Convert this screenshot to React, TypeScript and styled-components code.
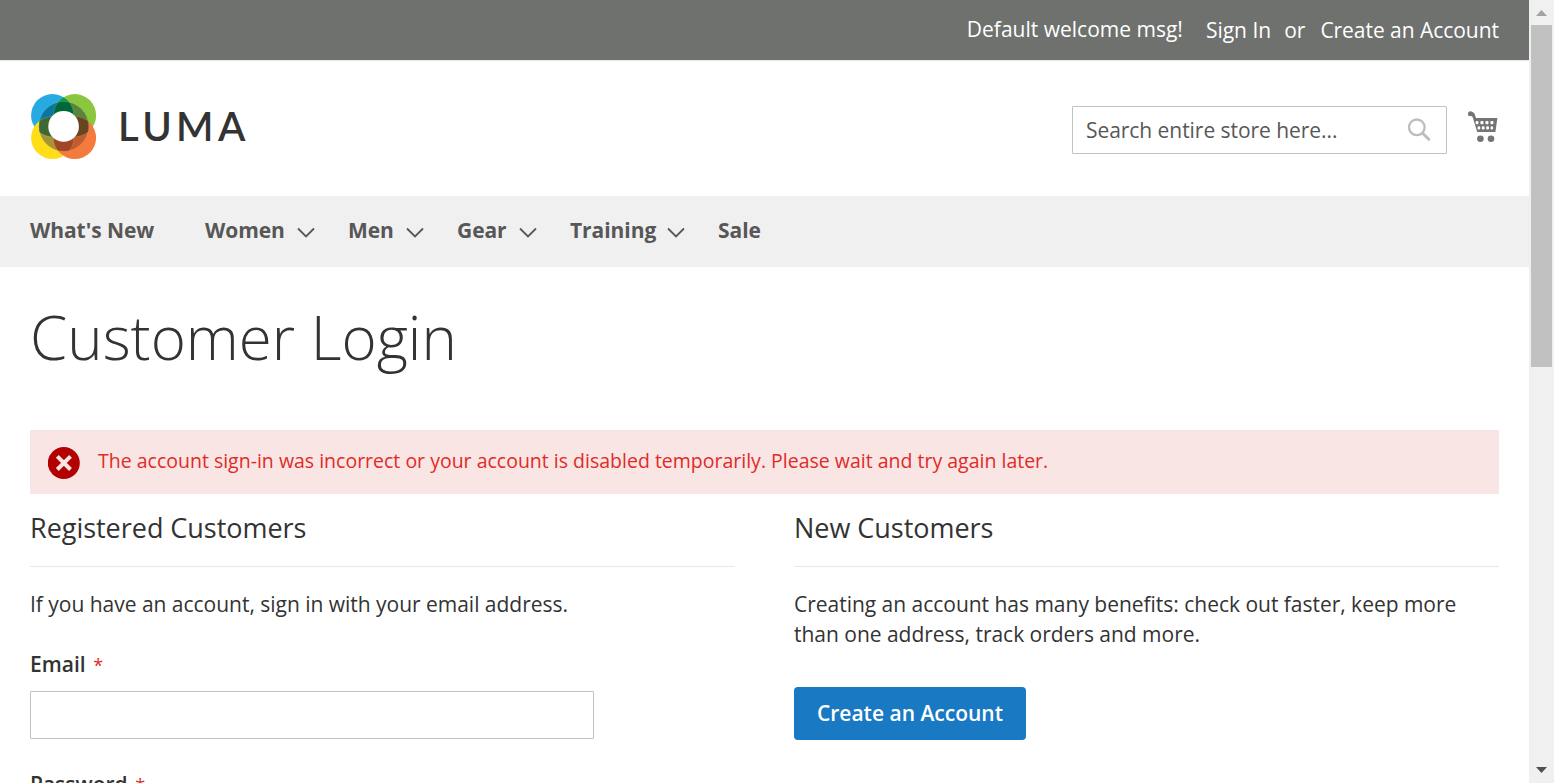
import React from "react";
import styled, { createGlobalStyle } from "styled-components";

const GlobalStyle = createGlobalStyle`
  *, *::before, *::after { box-sizing: border-box; }
  html, body { margin: 0; padding: 0; background: #fff; overflow: hidden; }
  body { font-family: "Open Sans", "Helvetica Neue", Helvetica, Arial, sans-serif; font-size: 21px; line-height: 30px; color: #333; }
  h1, h2, p { margin: 0; }
`;

const Viewport = styled.div`
  display: flex;
  width: 1554px;
  height: 783px;
  overflow: hidden;
`;

const Page = styled.div`
  flex: 1;
  min-width: 0;
  height: 783px;
  overflow: hidden;
`;

const TopBar = styled.div`
  display: flex;
  justify-content: flex-end;
  height: 61px;
  padding: 14px 30px 0 0;
  background: #6e716e;
  border-bottom: 1px solid #e8e8e8;
  color: #fff;
  white-space: nowrap;
`;

const TopItem = styled.span<{ $gap?: number; $drop?: number; $spacing?: number }>`
  margin-left: ${(p) => p.$gap ?? 0}px;
  padding-top: ${(p) => p.$drop ?? 0}px;
  letter-spacing: ${(p) => p.$spacing ?? 0}px;
`;

const Header = styled.header`
  display: flex;
  align-items: flex-start;
  height: 135px;
  padding: 0 30px;
`;

const Logo = styled.a`
  display: flex;
  margin-top: 32px;
  margin-right: auto;
`;

const Wordmark = styled.span`
  margin-left: 20px;
  margin-top: 8px;
  font-family: Lato, sans-serif;
  font-weight: 600;
  font-size: 40px;
  line-height: 50px;
  letter-spacing: 4.4px;
  color: #333;
`;

const SearchBox = styled.div`
  display: flex;
  align-items: center;
  justify-content: space-between;
  width: 375px;
  height: 48px;
  margin-top: 45px;
  padding: 0 15px 0 13px;
  border: 1px solid #c2c2c2;
  border-radius: 1px;
  color: #575757;
`;

const SearchHint = styled.span`
  letter-spacing: -0.05px;
`;

const CartButton = styled.a`
  display: flex;
  margin: 48px 0 0 20px;
  width: 32px;
`;

const NavBar = styled.nav`
  display: flex;
  height: 71px;
  padding: 19px 30px;
  background: #f0f0f0;
`;

const NavItem = styled.a<{ $width: number }>`
  display: flex;
  align-items: flex-start;
  justify-content: space-between;
  width: ${(p) => p.$width}px;
  margin-right: 33px;
  font-weight: 700;
  letter-spacing: -0.06px;
  color: #575757;
  white-space: nowrap;
`;

const Chevron = styled.svg`
  flex: none;
  margin-top: 12px;
`;

const Main = styled.main`
  padding: 0 30px;
`;

const PageTitle = styled.h1`
  padding-top: 37px;
  height: 163px;
  font-size: 60px;
  line-height: 66px;
  font-weight: 300;
  white-space: nowrap;
`;

const ErrorMessage = styled.div`
  display: flex;
  height: 64px;
  padding: 17px 18px 0;
  background: #fae5e5;
  color: #e02b27;
  font-size: 19.5px;
  line-height: 27px;
  font-weight: 400;
  white-space: nowrap;
`;

const ErrorText = styled.span`
  margin-left: 18px;
`;

const Columns = styled.div`
  display: grid;
  grid-template-columns: 705px 705px;
  justify-content: space-between;
  padding-top: 15px;
`;

const BlockTitle = styled.h2`
  height: 58px;
  border-bottom: 1px solid #e8e8e8;
  font-size: 27px;
  line-height: 38px;
  font-weight: 400;
  letter-spacing: -0.03px;
`;

const Note = styled.p`
  margin-top: 22px;
  letter-spacing: -0.02px;
  white-space: nowrap;
`;

const Field = styled.div`
  width: 564px;
  margin-top: 30px;
`;

const Label = styled.label`
  display: block;
  margin-bottom: 11px;
  font-weight: 600;
`;

const Required = styled.span`
  margin-left: 7.5px;
  font-size: 18px;
  font-weight: 400;
  color: #e02b27;
`;

const Input = styled.input`
  display: block;
  width: 100%;
  height: 48px;
  border: 1px solid #c2c2c2;
  border-radius: 1px;
  background: #fff;
  outline: none;
`;

const PrimaryButton = styled.button`
  display: block;
  width: 232px;
  height: 53px;
  margin-top: 38px;
  padding: 0;
  border: 0;
  border-radius: 4px;
  background: #1979c3;
  color: #fff;
  font: 600 21px/53px "Open Sans", sans-serif;
`;

const ScrollTrack = styled.div`
  display: flex;
  flex-direction: column;
  align-items: center;
  justify-content: space-between;
  width: 25px;
  height: 783px;
  background: #f0f0f0;
`;

const ScrollThumb = styled.div`
  width: 21px;
  height: 342px;
  margin-bottom: auto;
  background: #c1c1c1;
`;

const ScrollArrow = styled.svg`
  display: block;
  flex: none;
`;

const LumaMark = () => (
  <svg width="68" height="68" viewBox="30 93 68 68">
    <defs>
      <clipPath id="blue"><circle cx="52.4" cy="115.4" r="21.3" /></clipPath>
      <clipPath id="green"><circle cx="74.8" cy="115.4" r="21.3" /></clipPath>
      <clipPath id="yellow"><circle cx="52.4" cy="137.8" r="21.3" /></clipPath>
      <clipPath id="ring"><circle cx="63.8" cy="126.4" r="24.9" /></clipPath>
    </defs>
    <circle cx="52.4" cy="115.4" r="21.3" fill="#27a9e1" />
    <circle cx="74.8" cy="115.4" r="21.3" fill="#8cc63f" />
    <circle cx="52.4" cy="137.8" r="21.3" fill="#ffde17" />
    <circle cx="74.8" cy="137.8" r="21.3" fill="#f47b3c" />
    <g clipPath="url(#blue)"><circle cx="74.8" cy="115.4" r="21.3" fill="#00a14b" /></g>
    <g clipPath="url(#ring)">
      <circle cx="52.4" cy="115.4" r="21.3" fill="#0b75a0" />
      <circle cx="74.8" cy="115.4" r="21.3" fill="#58853b" />
      <circle cx="52.4" cy="137.8" r="21.3" fill="#a89435" />
      <circle cx="74.8" cy="137.8" r="21.3" fill="#c15c2f" />
      <g clipPath="url(#blue)">
        <circle cx="52.4" cy="137.8" r="21.3" fill="#3c6a32" />
        <circle cx="74.8" cy="115.4" r="21.3" fill="#006838" />
      </g>
      <g clipPath="url(#green)"><circle cx="74.8" cy="137.8" r="21.3" fill="#67461f" /></g>
      <g clipPath="url(#yellow)"><circle cx="74.8" cy="137.8" r="21.3" fill="#a04823" /></g>
    </g>
    <g fill="none" stroke="#fff" strokeOpacity="0.22" strokeWidth="0.6">
      <circle cx="63.8" cy="126.4" r="24.9" />
      <g clipPath="url(#ring)">
        <circle cx="52.4" cy="115.4" r="21.3" />
        <circle cx="74.8" cy="115.4" r="21.3" />
        <circle cx="52.4" cy="137.8" r="21.3" />
        <circle cx="74.8" cy="137.8" r="21.3" />
      </g>
    </g>
    <circle cx="63.6" cy="126.4" r="15.3" fill="#fff" />
  </svg>
);

const SearchIcon = () => (
  <svg width="24" height="24" viewBox="0 0 24 24" fill="none" stroke="#bdbdbd">
    <circle cx="9.8" cy="9.3" r="7.8" strokeWidth="2.3" />
    <path d="M15.6 15.2 21.8 21.3" strokeWidth="3" strokeLinecap="round" />
  </svg>
);

const CartIcon = () => (
  <svg width="32" height="34" viewBox="1467 109 32 34" fill="#757575">
    <path d="M1470 111.2c1.3-.3 3.6 1 4.4 2.2l1.6 4.5h21.4l-2 14h-18.2l-4.4-14.4-.9-1.5c-2.3.7-4-.2-4-2 0-1.4.8-2.4 2.1-2.8z" />
    <circle cx="1480.4" cy="138.7" r="3.3" />
    <circle cx="1491" cy="138.7" r="3.3" />
    <g fill="#fff">
      <rect x="1475.6" y="121" width="2.9" height="3.2" rx="1.2" />
      <rect x="1480.4" y="121" width="3.1" height="3.2" rx="1.2" />
      <rect x="1485.4" y="121" width="3.1" height="3.2" rx="1.2" />
      <rect x="1490.4" y="121" width="3.1" height="3.2" rx="1.2" />
      <rect x="1477.6" y="126.3" width="2.6" height="3.2" rx="1.2" />
      <rect x="1481.8" y="126.3" width="2.8" height="3.2" rx="1.2" />
      <rect x="1486.2" y="126.3" width="2.8" height="3.2" rx="1.2" />
      <rect x="1490.6" y="126.3" width="2.5" height="3.2" rx="1.2" />
    </g>
  </svg>
);

const ErrorIcon = () => (
  <svg width="32" height="32" viewBox="0 0 32 32">
    <circle cx="15.8" cy="16" r="16" fill="#b30000" />
    <path d="M9.3 9.3 22.5 22.5M22.5 9.3 9.3 22.5" stroke="#fae5e5" strokeWidth="4" />
  </svg>
);

const DownChevron = () => (
  <Chevron width="18" height="12" viewBox="0 0 18 12" fill="none" stroke="#575757" strokeWidth="1.8">
    <path d="M1 1.5 9 9.5 17 1.5" />
  </Chevron>
);

const navItems = [
  { label: "What's New", width: 142, menu: false },
  { label: "Women", width: 110, menu: true },
  { label: "Men", width: 76, menu: true },
  { label: "Gear", width: 80, menu: true },
  { label: "Training", width: 115, menu: true },
  { label: "Sale", width: 60, menu: false },
];

export default function App() {
  return (
    <>
      <GlobalStyle />
      <Viewport>
        <Page>
          <TopBar>
            <TopItem>Default welcome msg!</TopItem>
            <TopItem $gap={23} $drop={1}>Sign In</TopItem>
            <TopItem $gap={13} $drop={1}>or</TopItem>
            <TopItem $gap={15} $drop={1} $spacing={-0.04}>Create an Account</TopItem>
          </TopBar>
          <Header>
            <Logo>
              <LumaMark />
              <Wordmark>LUMA</Wordmark>
            </Logo>
            <SearchBox>
              <SearchHint>Search entire store here...</SearchHint>
              <SearchIcon />
            </SearchBox>
            <CartButton><CartIcon /></CartButton>
          </Header>
          <NavBar>
            {navItems.map((item) => (
              <NavItem key={item.label} $width={item.width}>
                {item.label}
                {item.menu && <DownChevron />}
              </NavItem>
            ))}
          </NavBar>
          <Main>
            <PageTitle>Customer Login</PageTitle>
            <ErrorMessage role="alert">
              <ErrorIcon />
              <ErrorText>The account sign-in was incorrect or your account is disabled temporarily. Please wait and try again later.</ErrorText>
            </ErrorMessage>
            <Columns>
              <section>
                <BlockTitle>Registered Customers</BlockTitle>
                <Note>If you have an account, sign in with your email address.</Note>
                <Field>
                  <Label>Email<Required>*</Required></Label>
                  <Input type="email" />
                </Field>
                <Field>
                  <Label>Password<Required>*</Required></Label>
                  <Input type="password" />
                </Field>
              </section>
              <section>
                <BlockTitle>New Customers</BlockTitle>
                <Note>
                  Creating an account has many benefits: check out faster, keep more
                  <br />
                  than one address, track orders and more.
                </Note>
                <PrimaryButton>Create an Account</PrimaryButton>
              </section>
            </Columns>
          </Main>
        </Page>
        <ScrollTrack>
          <ScrollArrow width="25" height="25" viewBox="0 0 25 25"><path d="M7 16 12.5 10 18 16z" fill="#a3a3a3" /></ScrollArrow>
          <ScrollThumb />
          <ScrollArrow width="25" height="25" viewBox="0 0 25 25"><path d="M7 9 18 9 12.5 15z" fill="#505050" /></ScrollArrow>
        </ScrollTrack>
      </Viewport>
    </>
  );
}
